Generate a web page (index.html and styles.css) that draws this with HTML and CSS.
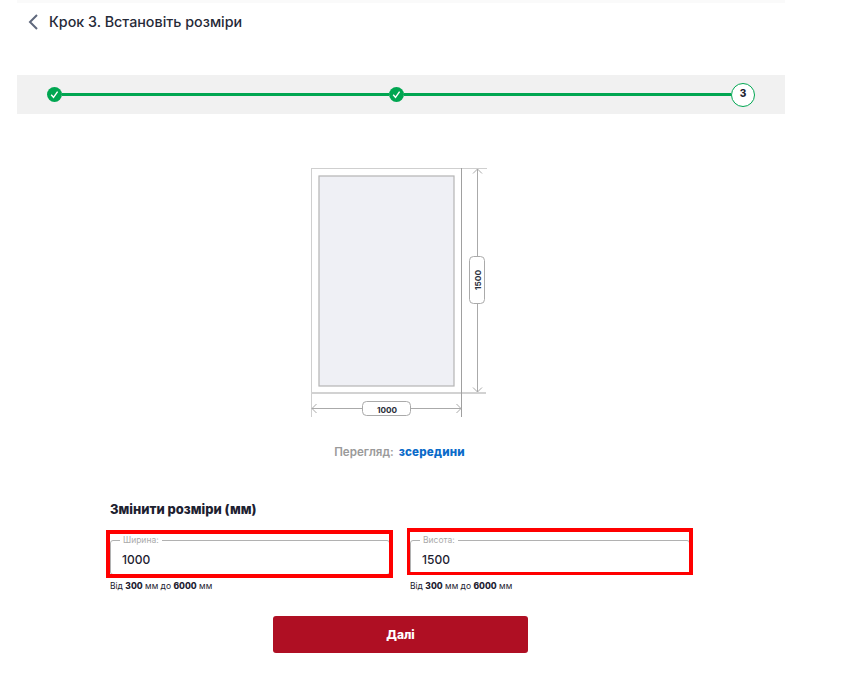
FILE: index.html
```html
<!DOCTYPE html>
<html lang="uk">
<head>
<meta charset="utf-8">
<title>Крок 3</title>
<link rel="stylesheet" href="styles.css">
</head>
<body>
<main class="page">
  <div class="top-strip"></div>
  <header class="header">
    <svg class="back" width="10" height="16" viewBox="0 0 10 16"><path d="M9 1 2 8l7 7" fill="none" stroke="#5f687c" stroke-width="2"/></svg>
    <h1 class="title">Крок 3. Встановіть розміри</h1>
  </header>
  <div class="steps">
    <span class="dot"><svg width="15" height="15" viewBox="0 0 15 15"><circle cx="7.5" cy="7.5" r="7.5" fill="#00a651"/><path d="M4.2 7.8 6.5 10.3 10.6 4.6" fill="none" stroke="#fff" stroke-width="1.4"/></svg></span>
    <span class="line"></span>
    <span class="dot"><svg width="15" height="15" viewBox="0 0 15 15"><circle cx="7.5" cy="7.5" r="7.5" fill="#00a651"/><path d="M4.2 7.8 6.5 10.3 10.6 4.6" fill="none" stroke="#fff" stroke-width="1.4"/></svg></span>
    <span class="line"></span>
    <span class="current">3</span>
  </div>
  <div class="drawing">
    <svg width="177" height="250" viewBox="311 168 177 250">
      <path d="M311.5 168.5H487M311.5 168v249" fill="none" stroke="#cfcfcf"/>
      <path d="M311 393h175" fill="none" stroke="#d2d2d2" stroke-width="2"/>
      <path d="M461.5 168v249" fill="none" stroke="#a0a0a0"/>
      <rect x="319" y="176" width="135" height="210" fill="#eff0f5" stroke="#b4b4b4" stroke-width="1.200"/>
      <path d="M477.500 169V392M473 173.500l4.500-4.500 4.500 4.500M473 387.500l4.500 4.500 4.500-4.500" fill="none" stroke="#aaa"/>
      <path d="M312 408.500H461M316.500 404l-4.500 4.500 4.500 4.500M456.500 404l4.500 4.500-4.500 4.500" fill="none" stroke="#aaa"/>
      <rect x="469.500" y="256.500" width="15" height="47" rx="4" fill="#fff" stroke="#aaa"/>
      <rect x="362.500" y="401.500" width="48" height="14" rx="4" fill="#fff" stroke="#aaa"/>
      <text class="dim" x="387" y="412.500" text-anchor="middle">1000</text>
      <text class="dim" transform="translate(480.500 280) rotate(-90)" text-anchor="middle">1500</text>
    </svg>
  </div>
  <p class="view"><span class="view-label">Перегляд:</span> <a class="view-link">зсередини</a></p>
  <section class="form">
    <h2 class="form-title">Змінити розміри (мм)</h2>
    <div class="fields">
      <div class="col">
        <div class="field">
          <fieldset class="box"><legend class="legend">Ширина:</legend><span class="value">1000</span></fieldset>
          <span class="mark mark-a"></span>
        </div>
        <p class="hint">Від <b>300</b> мм до <b>6000</b> мм</p>
      </div>
      <div class="col">
        <div class="field">
          <fieldset class="box"><legend class="legend">Висота:</legend><span class="value">1500</span></fieldset>
          <span class="mark mark-b"></span>
        </div>
        <p class="hint">Від <b>300</b> мм до <b>6000</b> мм</p>
      </div>
    </div>
  </section>
  <div class="actions"><button class="next" type="button">Далі</button></div>
</main>
</body>
</html>
```
FILE: styles.css
```css
* { box-sizing: border-box; }
html, body { margin: 0; padding: 0; background: #fff; }
body { font-family: Inter, "Noto Sans", sans-serif; color: #1d2130; height: 685px; overflow: hidden; }
.page { width: 768px; margin-left: 17px; }
.top-strip { height: 3px; background: #fafafa; }
.header { display: flex; align-items: center; height: 37px; padding-left: 11px; gap: 11px; }
.title { margin: 0; font-size: 14.300px; font-weight: 500; color: #262a38; }
.back { display: block; }
.steps { margin-top: 35px; height: 39px; background: #f1f1f1; display: flex; align-items: center; padding-left: 30px; padding-right: 30px; }
.dot { display: block; width: 15px; height: 15px; flex: none; }
.dot svg { display: block; }
.line { display: block; height: 3px; background: #00a651; flex: 1; }
.current { flex: none; width: 24px; height: 24px; border-radius: 50%; border: 1px solid #00a651; background: #fff; font-size: 10px; font-weight: 800; display: flex; align-items: center; justify-content: center; padding-bottom: 4px; }
.drawing { margin-top: 54px; display: flex; justify-content: flex-start; padding-left: 294px; height: 250px; }
.drawing svg { display: block; }
.dim { font-family: Inter, sans-serif; font-size: 8.200px; font-weight: 700; fill: #2a2e3a; }
.view { margin: 27px 0 0; text-align: center; font-size: 11.600px; font-weight: 600; line-height: 14px; padding-right: 3px; }
.view-label { color: #9a9a9a; margin-right: 2px; }
.view-link { color: #0a6bc9; font-weight: 800; letter-spacing: 0.2px; }
.form { margin-top: 42px; padding-left: 93px; }
.form-title { margin: 0; font-size: 13px; font-weight: 800; line-height: 16px; color: #1d2130; }
.fields { display: flex; gap: 20px; margin-top: 18px; align-items: flex-start; }
.col { width: 280px; }
.field { position: relative; height: 40px; }
.box { margin: 0; padding: 0 0 0 11px; height: 40px; border: 1px solid #b1b1b1; border-radius: 3px; display: block; min-width: 0; }
.legend { font-size: 8.500px; line-height: 11px; color: #aaa; padding: 0 3px; margin-left: -2px; font-weight: 400; }
.value { display: block; font-size: 12px; font-weight: 500; line-height: 16px; margin-top: 6px; color: #1d2130; }
.mark { position: absolute; border: 4px solid #f00; pointer-events: none; }
.mark-a { left: -4px; right: -3px; top: -5px; bottom: -3px; }
.mark-b { left: -3px; right: -3px; top: -7px; bottom: 0; border-width: 4px 4px 3px 3px; }
.hint { margin: 6px 0 0; font-size: 8.500px; line-height: 11px; color: #1d2130; }
.hint b { font-weight: 800; }
.actions { margin-top: 24px; padding-left: 256px; }
.next { display: block; width: 255px; height: 37px; border: 0; border-radius: 3px; background: #af0f23; color: #fff; font-family: Inter, sans-serif; font-size: 12px; font-weight: 800; padding: 0 0 1px; }
```
